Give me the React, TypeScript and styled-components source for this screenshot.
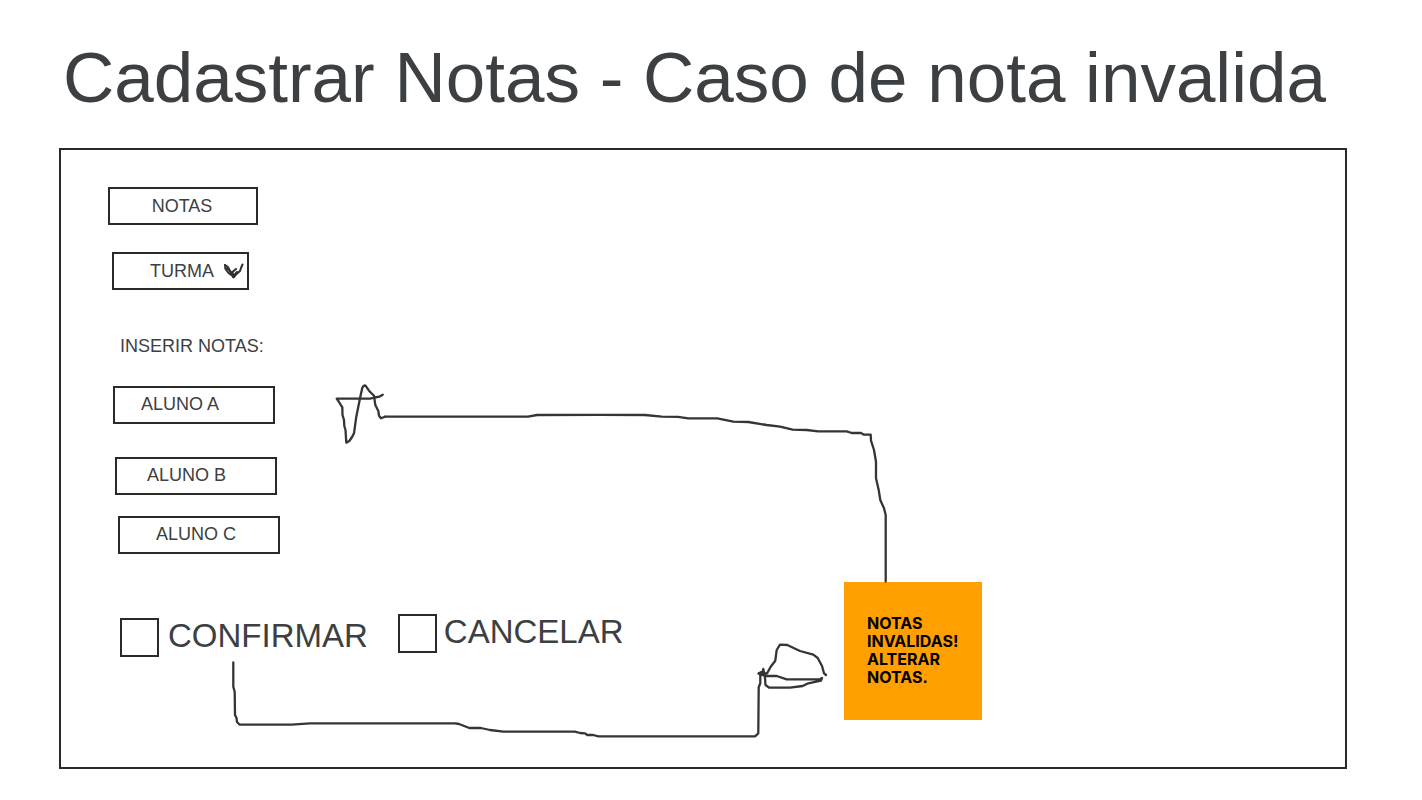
import React from "react";
import styled, { createGlobalStyle } from "styled-components";

const ink = "#2a2a2a";
const textColor = "#3c4043";

const GlobalStyle = createGlobalStyle`
  *, *::before, *::after { box-sizing: border-box; }
  body {
    margin: 0;
    background: #ffffff;
    color: ${textColor};
    font-family: "Liberation Sans", Arial, sans-serif;
  }
`;

const Page = styled.main`
  padding: 38px 75px 31px 59px;
`;

const Title = styled.h1`
  margin: 0 0 30px 4px;
  font-size: 71px;
  line-height: 80px;
  font-weight: 400;
  white-space: nowrap;
`;

const Board = styled.section`
  position: relative;
  padding: 37px 47px 110px;
  border: 2px solid ${ink};
`;

const Form = styled.form`
  display: flex;
  flex-direction: column;
  align-items: flex-start;
`;

const Stack = styled.div<{ $gap: number; $bottom: number }>`
  display: flex;
  flex-direction: column;
  align-items: flex-start;
  gap: ${(p) => p.$gap}px;
  margin-bottom: ${(p) => p.$bottom}px;
`;

const NotasButton = styled.button`
  width: 150px;
  height: 38px;
  padding: 0 2px 0 0;
  border: 2px solid ${ink};
  background: #ffffff;
  color: inherit;
  font: 18px "Liberation Sans", Arial, sans-serif;
`;

const SelectBox = styled.div`
  position: relative;
  margin-left: 4px;
`;

const Select = styled.select`
  display: block;
  appearance: none;
  width: 137px;
  height: 38px;
  padding: 0 0 0 36px;
  border: 2px solid ${ink};
  border-radius: 0;
  background: #ffffff;
  color: inherit;
  font: 18px "Liberation Sans", Arial, sans-serif;
`;

const Chevron = styled.svg`
  position: absolute;
  top: 10px;
  right: 5px;
  pointer-events: none;
`;

const Caption = styled.p`
  margin: 0 0 30px 12px;
  font-size: 18px;
  line-height: 20px;
`;

const NotaInput = styled.input<{ $shift: number; $indent: number }>`
  width: 162px;
  height: 38px;
  margin-left: ${(p) => p.$shift}px;
  padding: 0 0 2px ${(p) => p.$indent}px;
  border: 2px solid ${ink};
  border-radius: 0;
  background: #ffffff;
  color: inherit;
  font: 18px "Liberation Sans", Arial, sans-serif;
`;

const Choices = styled.div`
  display: flex;
  align-items: flex-start;
  gap: 30px;
  margin-left: 12px;
`;

const Choice = styled.label<{ $drop?: number; $gap: number }>`
  display: flex;
  align-items: flex-start;
  gap: ${(p) => p.$gap}px;
  margin-top: ${(p) => p.$drop ?? 0}px;
  font-size: 33px;
  line-height: 36px;
`;

const Tick = styled.input`
  appearance: none;
  width: 39px;
  height: 39px;
  margin: 0;
  border: 2px solid ${ink};
  background: #ffffff;
  &:checked {
    background: ${ink};
  }
`;

const Sketch = styled.svg`
  position: absolute;
  top: 0;
  left: 0;
  overflow: visible;
  pointer-events: none;
  fill: none;
  stroke: #353535;
  stroke-width: 2.3;
  stroke-linecap: round;
  stroke-linejoin: round;
`;

const Note = styled.aside`
  position: absolute;
  top: 432px;
  left: 783px;
  width: 138px;
  height: 138px;
  padding: 32px 20px 0 23px;
  background: #ff9f00;
  color: #000000;
  font-family: Inter, sans-serif;
  font-size: 16px;
  line-height: 18px;
  font-weight: 700;
`;

const NoteLine = styled.span`
  display: block;
  white-space: nowrap;
`;

const alunos = [
  { name: "ALUNO A", shift: 5, indent: 26, gap: 33 },
  { name: "ALUNO B", shift: 7, indent: 30, gap: 21 },
  { name: "ALUNO C", shift: 10, indent: 36, gap: 60 },
];

const noteLines = ["NOTAS", "INVALIDAS!", "ALTERAR", "NOTAS."];

export default function App() {
  return (
    <>
      <GlobalStyle />
      <Page>
        <Title>Cadastrar Notas - Caso de nota invalida</Title>
        <Board>
          <Form onSubmit={(e) => e.preventDefault()}>
            <Stack $gap={27} $bottom={46}>
              <NotasButton type="button">NOTAS</NotasButton>
              <SelectBox>
                <Select aria-label="Turma">
                  <option>TURMA</option>
                </Select>
                <Chevron
                  width="20"
                  height="18"
                  viewBox="0 0 20 18"
                  fill="none"
                  stroke="#303030"
                  strokeWidth="2"
                  strokeLinecap="round"
                  strokeLinejoin="round"
                >
                  <path d="M1 3 L1.500 7 L4.500 11 L8 13.500 L9.500 15.500 L12 12.500 L16 9 L17 6 L18.500 2.500" />
                  <path d="M1 3 L4 5 L6 9 L9 12 L9.500 15 M1.500 6 L5 8 L8 13 M9.500 15 L8.500 10 L12 7 M9.500 14 L13 10" />
                </Chevron>
              </SelectBox>
            </Stack>
            <Caption>INSERIR NOTAS:</Caption>
            {alunos.map((a) => (
              <Stack key={a.name} $gap={0} $bottom={a.gap}>
                <NotaInput
                  type="text"
                  aria-label={a.name}
                  defaultValue={a.name}
                  $shift={a.shift}
                  $indent={a.indent}
                />
              </Stack>
            ))}
            <Choices>
              <Choice $drop={4} $gap={9}>
                <Tick type="checkbox" />
                CONFIRMAR
              </Choice>
              <Choice $gap={7}>
                <Tick type="checkbox" />
                CANCELAR
              </Choice>
            </Choices>
          </Form>

          <Note>
            {noteLines.map((line) => (
              <NoteLine key={line}>{line}</NoteLine>
            ))}
          </Note>

          <Sketch width="1284" height="617" viewBox="61 150 1284 617" aria-hidden="true">
            {/* note to grade field */}
            <path d="M382.700 394.700 L379.300 396.700 L375 397.500 L370 398.700 H336.700 L339 402 L342.300 407.300 L342.500 415 L344 420 L344.300 426 L345.500 430 L346.300 442.700 L349.300 441 Q352.500 437 354 433.300 L356.300 416.700 L360 398.300 L362.300 387.700 Q364.700 383.500 366.700 387.300 L369 390.700 L374 395.700 L375.300 405 L378.300 411 L379 415.700 L381 418.300 L385 416.700" />
            <path d="M385 416.700 H528 L537 415 L600 414.800 L645 415 L661.700 416.700 L678 416.900 L688.300 418.300 H717.300 L733.300 421.700 L748.300 422 L766.700 425 L780 426.700 L792.700 429.700 L806.700 430 L818.300 431.300 H846.700 L851.700 433 H861 L864 434.700 H870.700 L871 440.700 L874 450 L876 461.700 V478.300 L878.700 490 L880.300 500 L884 508.300 L885.700 515 V581.500" />
            {/* confirm to note */}
            <path d="M233.300 662.500 V686.700 L234.700 691.700 L235 715 L236.500 718 L237 722 L239.700 724.700 H291.700 L310 723.300 H455 L459 724 L469.300 728 H481 L490 730 L503.300 731.700 H575 L580 733 L585 733.300 L587.300 735 H593.300 L598.300 736.300 H755 L758.300 733.300 L758.700 687.300 L760.300 683.300 V673.300" />
            <path d="M758.700 673.500 L763 671 L763.300 669 L764 673.500 H767 L770.700 666.700 L775.300 660.700 L776.700 650 L780 644.700 L787.300 645 L800 651 L813.300 654.700 L817.700 658 L822 666 L824 673.300 L826 675" />
            <path d="M758.700 673.500 L765 676 H776.700 L786.700 679.300 H820 L822 678 L821 680.700 L808.300 683.300 L802.700 686 L790 687.700 H769.300 L765.500 685 L764.700 673.300 L761 675 L764 672" />
          </Sketch>
        </Board>
      </Page>
    </>
  );
}
